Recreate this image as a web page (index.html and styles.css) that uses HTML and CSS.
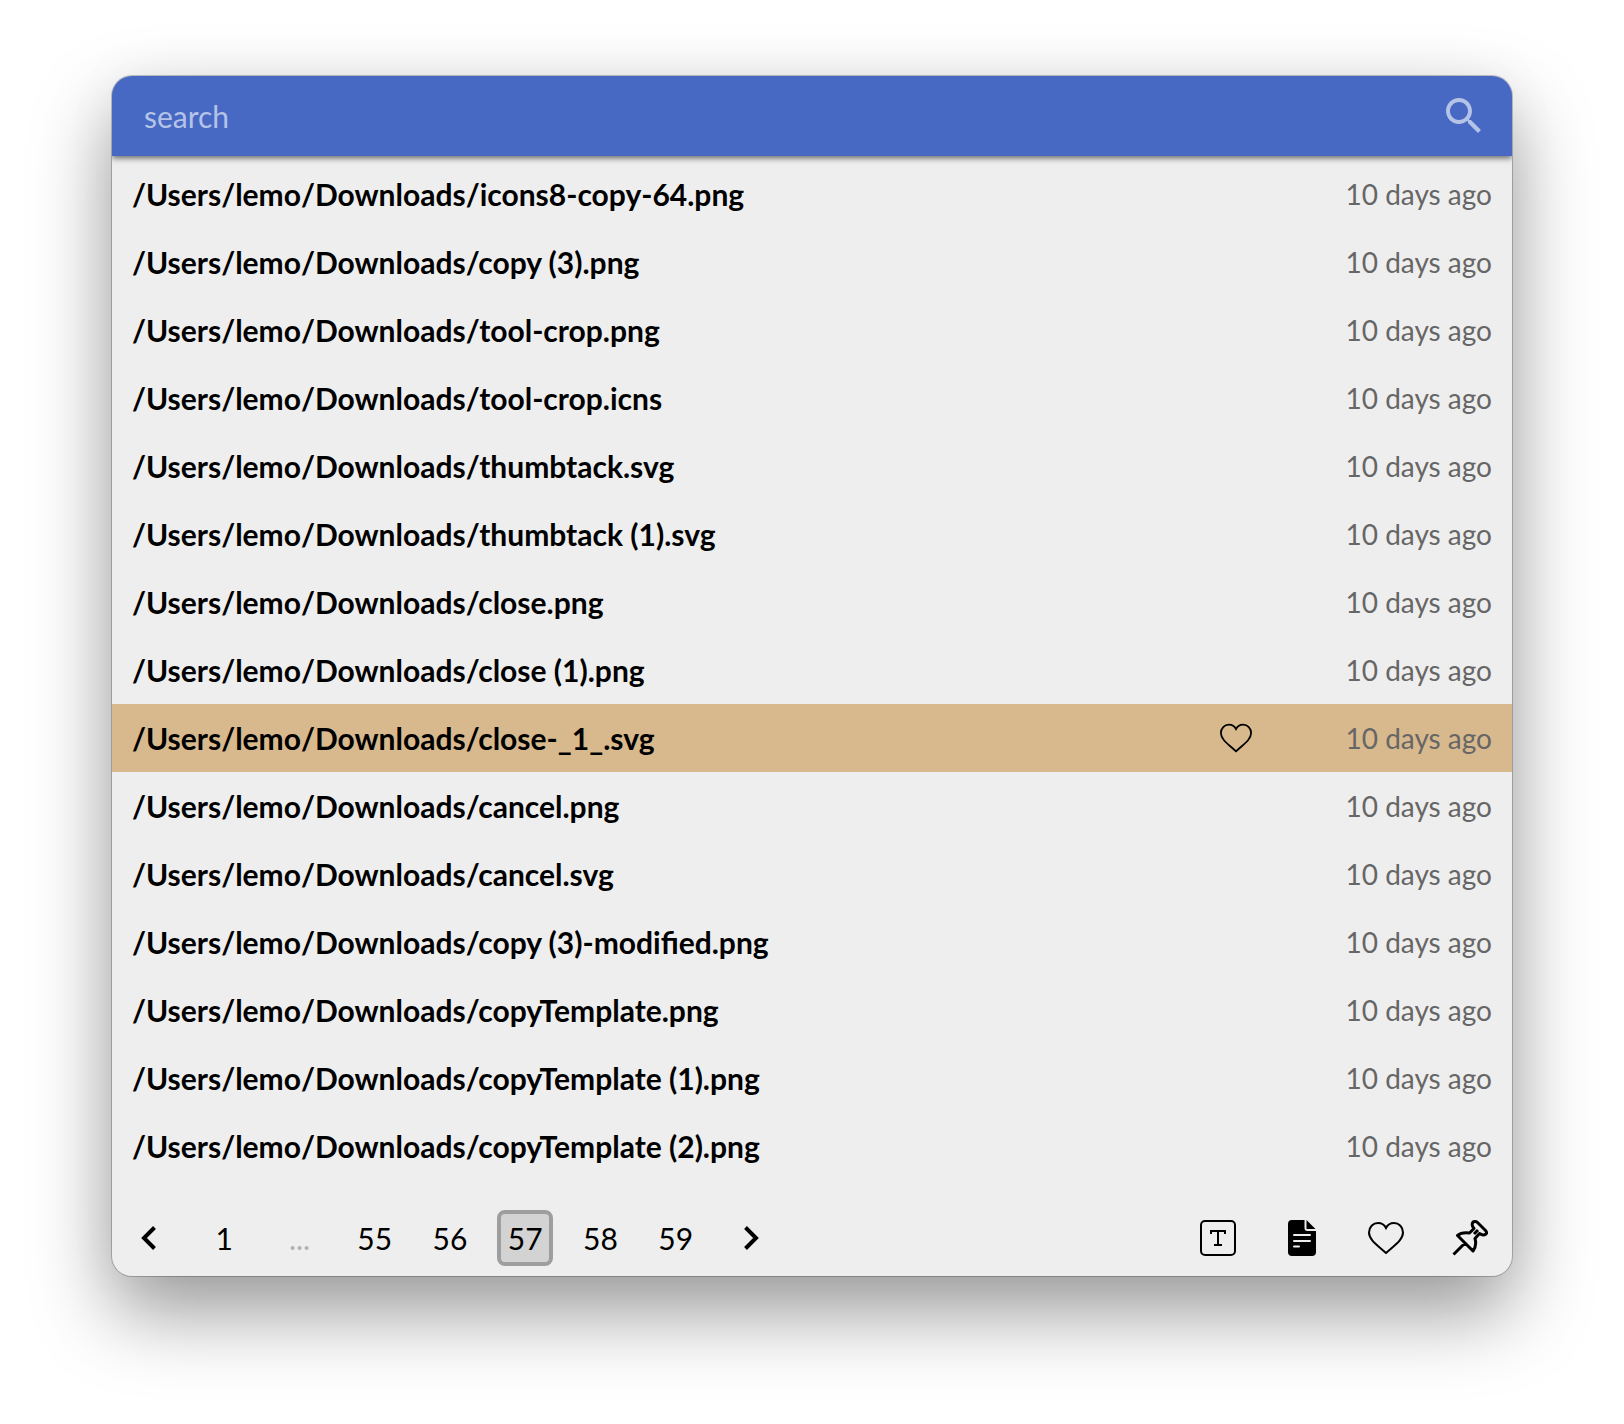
FILE: index.html
```
<!DOCTYPE html>
<html lang="en">
<head>
<meta charset="utf-8">
<meta name="viewport" content="width=device-width, initial-scale=1">
<title>Clipboard</title>
<link rel="stylesheet" href="styles.css">
</head>
<body>
<main class="window">
  <form class="search">
    <input class="search-input" type="text" placeholder="search" aria-label="search">
    <button class="search-button" type="button" aria-label="Search">
      <svg class="search-icon" viewBox="0 0 24 24"><path d="M15.5 14h-.79l-.28-.27C15.41 12.59 16 11.11 16 9.500 16 5.910 13.090 3 9.500 3S3 5.910 3 9.500 5.910 16 9.500 16c1.610 0 3.090-.59 4.230-1.570l.27.28v.79l5 4.990L20.490 19l-4.990-5zm-6 0C7.010 14 5 11.990 5 9.500S7.010 5 9.500 5 14 7.010 14 9.500 11.990 14 9.500 14z"/></svg>
    </button>
  </form>
  <ul class="list">
    <li class="row"><span class="path">/Users/lemo/Downloads/icons8-copy-64.png</span><time class="age">10 days ago</time></li>
    <li class="row"><span class="path">/Users/lemo/Downloads/copy (3).png</span><time class="age">10 days ago</time></li>
    <li class="row"><span class="path">/Users/lemo/Downloads/tool-crop.png</span><time class="age">10 days ago</time></li>
    <li class="row"><span class="path">/Users/lemo/Downloads/tool-crop.icns</span><time class="age">10 days ago</time></li>
    <li class="row"><span class="path">/Users/lemo/Downloads/thumbtack.svg</span><time class="age">10 days ago</time></li>
    <li class="row"><span class="path">/Users/lemo/Downloads/thumbtack (1).svg</span><time class="age">10 days ago</time></li>
    <li class="row"><span class="path">/Users/lemo/Downloads/close.png</span><time class="age">10 days ago</time></li>
    <li class="row"><span class="path">/Users/lemo/Downloads/close (1).png</span><time class="age">10 days ago</time></li>
    <li class="row row-active"><span class="path">/Users/lemo/Downloads/close-_1_.svg</span>
      <button class="like" type="button" aria-label="Favorite"><svg class="like-icon" viewBox="0 0 36 36"><path class="line" d="M18 33C10 25.500 1 20 1 12.500C1 7 5 3 10 3C13.500 3 16.500 5 18 8C19.500 5 22.500 3 26 3C31 3 35 7 35 12.500C35 20 26 25.500 18 33Z"/></svg></button>
      <time class="age">10 days ago</time></li>
    <li class="row"><span class="path">/Users/lemo/Downloads/cancel.png</span><time class="age">10 days ago</time></li>
    <li class="row"><span class="path">/Users/lemo/Downloads/cancel.svg</span><time class="age">10 days ago</time></li>
    <li class="row"><span class="path">/Users/lemo/Downloads/copy (3)-modified.png</span><time class="age">10 days ago</time></li>
    <li class="row"><span class="path">/Users/lemo/Downloads/copyTemplate.png</span><time class="age">10 days ago</time></li>
    <li class="row"><span class="path">/Users/lemo/Downloads/copyTemplate (1).png</span><time class="age">10 days ago</time></li>
    <li class="row"><span class="path">/Users/lemo/Downloads/copyTemplate (2).png</span><time class="age">10 days ago</time></li>
  </ul>
  <footer class="footer">
    <nav class="pages" aria-label="Pages">
      <button class="page" type="button" aria-label="Previous page"><svg class="chevron" viewBox="0 0 24 24"><path d="M17.500 1.500L7 12L17.500 22.500"/></svg></button>
      <button class="page" type="button">1</button>
      <button class="page" type="button" disabled>...</button>
      <button class="page" type="button">55</button>
      <button class="page" type="button">56</button>
      <button class="page page-current" type="button" aria-current="page">57</button>
      <button class="page" type="button">58</button>
      <button class="page" type="button">59</button>
      <button class="page" type="button" aria-label="Next page"><svg class="chevron" viewBox="0 0 24 24"><path d="M6.500 1.500L17 12L6.500 22.500"/></svg></button>
    </nav>
    <div class="tools">
      <button class="tool" type="button" aria-label="Text"><svg viewBox="0 0 36 36"><rect class="line" x="1" y="1" width="34" height="34" rx="4"/><path class="line" d="M11 14V11H25V14M18 11V25M14 25H22"/></svg></button>
      <button class="tool" type="button" aria-label="Files"><svg viewBox="0 0 36 36"><path d="M8 0H20.500V8Q20.500 11 23.500 11H32V32Q32 36 28 36H8Q4 36 4 32V4Q4 0 8 0ZM22.500 0L31.500 9H22.500Z"/><path class="cut" d="M10 15H26M10 21H26M10 26.500H15"/></svg></button>
      <button class="tool" type="button" aria-label="Favorites"><svg viewBox="0 0 36 36"><path class="line" d="M18 33C10 25.500 1 20 1 12.500C1 7 5 3 10 3C13.500 3 16.500 5 18 8C19.500 5 22.500 3 26 3C31 3 35 7 35 12.500C35 20 26 25.500 18 33Z"/></svg></button>
      <button class="tool" type="button" aria-label="Pin"><svg viewBox="0 0 36 36"><path class="pin" d="M1.500 34.500L13 23M5.500 15.500C9 12.500 14 12.500 17.500 13L22 8.500C19 5 20 1.500 23 1.500Q24.500 1.500 25.500 2.500L33.500 10.500Q35.500 13 34 14C32 15.500 29.500 15 27.500 13.500L23 18.500C24 22 24 27 21 31ZM22 14L26 10"/></svg></button>
    </div>
  </footer>
</main>
</body>
</html>
```
FILE: styles.css
```
* { box-sizing: border-box; }

body {
  margin: 0;
  padding: 76px 112px 148px;
  background: #fff;
  color: #000;
  font-family: Lato, "Gill Sans", sans-serif;
  font-size: 30px;
  line-height: 40px;
}

button {
  display: flex;
  align-items: center;
  justify-content: center;
  padding: 0;
  border: 0;
  background: none;
  color: inherit;
  font: inherit;
}

.window {
  overflow: hidden;
  border-radius: 20px;
  background: #eee;
  box-shadow: 0 0 0 1px rgba(0, 0, 0, .22), 0 36px 80px rgba(0, 0, 0, .4), 0 0 60px rgba(0, 0, 0, .04);
}

.search {
  position: relative;
  display: flex;
  align-items: center;
  height: 80px;
  padding: 0 24px 0 32px;
  background: #4769c4;
  box-shadow: 0 2px 6px rgba(0, 0, 0, .6);
}

.search-input {
  flex: 1;
  min-width: 0;
  padding: 0;
  border: 0;
  outline: 0;
  background: none;
  color: #fff;
  font: inherit;
}

.search-input::placeholder { color: #b5c3e7; opacity: 1; }

.search-button { color: #b5c3e7; }

.search-icon { width: 48px; height: 48px; fill: currentColor; }

.list { margin: 0; padding: 4px 0 0; list-style: none; }

.row {
  display: flex;
  align-items: center;
  height: 68px;
  padding: 0 20px;
}

.row-active { background: #d8b98d; }

.path {
  flex: 1;
  min-width: 0;
  overflow: hidden;
  font-weight: 700;
  text-overflow: ellipsis;
  white-space: nowrap;
}

.age {
  width: 160px;
  color: #666;
  font-size: 28px;
  text-align: right;
  white-space: nowrap;
}

.like { margin-right: 80px; }

.like-icon { width: 32px; height: 32px; }

.line { fill: none; stroke: #000; stroke-width: 2; }

.footer {
  display: flex;
  align-items: center;
  justify-content: space-between;
  padding: 30px 24px 10px 9px;
}

.pages { display: flex; justify-content: space-between; width: 658px; }

.page { width: 56px; height: 56px; border-radius: 8px; }

.page:disabled { color: #b1b1b1; }

.page-current { border: 4px solid #9e9e9e; background: #d3d3d3; }

.chevron { width: 24px; height: 24px; fill: none; stroke: #000; stroke-width: 4; }

.tools { display: flex; gap: 48px; }

.tool { width: 36px; height: 36px; }

.tool svg { width: 36px; height: 36px; }

.cut { fill: none; stroke: #eee; stroke-width: 2; stroke-linecap: round; }

.pin { fill: none; stroke: #000; stroke-width: 3; stroke-linejoin: round; }
```
